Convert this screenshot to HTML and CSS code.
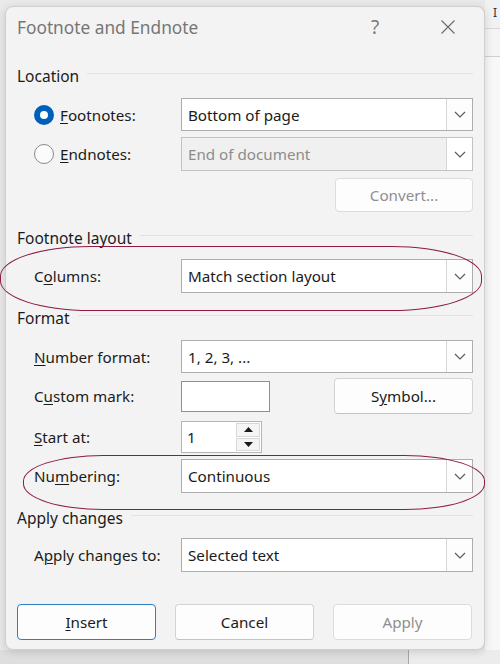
FILE: index.html
```html
<!DOCTYPE html>
<html lang="en">
<head>
    <meta charset="UTF-8">
    <meta name="viewport" content="width=device-width, initial-scale=1.0">
    <title>Footnote and Endnote</title>
    <link rel="stylesheet" href="styles.css">
</head>
<body>
    <div class="screen">
        <div class="dialog">
            <header class="titlebar">
                <span class="title">Footnote and Endnote</span>
                <span class="help">?</span>
                <span class="close">
                    <svg width="14" height="14" viewBox="0 0 14 14">
                        <path d="M0.5 0.5L13.5 13.5M13.5 0.5L0.5 13.5" stroke="#6b6b6b" stroke-width="1.1" fill="none"/>
                    </svg>
                </span>
            </header>

            <div class="content">
                <div class="group-head g-location">Location</div>

                <div class="row r-foot">
                    <label class="label radio-label"><span class="radio checked"></span><span><u>F</u>ootnotes:</span></label>
                    <div class="select">
                        <span class="value">Bottom of page</span>
                        <span class="drop"><svg width="12" height="7" viewBox="0 0 12 7"><path d="M1 1L6 6L11 1" stroke="#5a5a5a" stroke-width="1.2" fill="none"/></svg></span>
                    </div>
                </div>

                <div class="row r-end">
                    <label class="label radio-label"><span class="radio"></span><span><u>E</u>ndnotes:</span></label>
                    <div class="select disabled">
                        <span class="value">End of document</span>
                        <span class="drop"><svg width="12" height="7" viewBox="0 0 12 7"><path d="M1 1L6 6L11 1" stroke="#5a5a5a" stroke-width="1.2" fill="none"/></svg></span>
                    </div>
                </div>

                <div class="row r-convert">
                    <button class="btn disabled convert">Convert...</button>
                </div>

                <div class="group-head g-layout">Footnote layout</div>

                <div class="row r-columns">
                    <span class="mark mark-columns"></span>
                    <label class="label">C<u>o</u>lumns:</label>
                    <div class="select">
                        <span class="value">Match section layout</span>
                        <span class="drop"><svg width="12" height="7" viewBox="0 0 12 7"><path d="M1 1L6 6L11 1" stroke="#5a5a5a" stroke-width="1.2" fill="none"/></svg></span>
                    </div>
                </div>

                <div class="group-head g-format">Format</div>

                <div class="row r-numfmt">
                    <label class="label"><u>N</u>umber format:</label>
                    <div class="select">
                        <span class="value">1, 2, 3, ...</span>
                        <span class="drop"><svg width="12" height="7" viewBox="0 0 12 7"><path d="M1 1L6 6L11 1" stroke="#5a5a5a" stroke-width="1.2" fill="none"/></svg></span>
                    </div>
                </div>

                <div class="row r-custom">
                    <label class="label">C<u>u</u>stom mark:</label>
                    <div class="field-pair">
                        <div class="textbox"></div>
                        <button class="btn symbol">S<u>y</u>mbol...</button>
                    </div>
                </div>

                <div class="row r-start">
                    <label class="label"><u>S</u>tart at:</label>
                    <div class="spinner">
                        <span class="spin-value">1</span>
                        <span class="spin-buttons">
                            <span class="spin-btn"><svg width="9" height="5" viewBox="0 0 9 5"><path d="M0 5L4.5 0L9 5Z" fill="#1a1a1a"/></svg></span>
                            <span class="spin-btn"><svg width="9" height="5" viewBox="0 0 9 5"><path d="M0 0L4.5 5L9 0Z" fill="#1a1a1a"/></svg></span>
                        </span>
                    </div>
                </div>

                <div class="row r-numbering">
                    <span class="mark mark-numbering"></span>
                    <label class="label">Nu<u>m</u>bering:</label>
                    <div class="select">
                        <span class="value">Continuous</span>
                        <span class="drop"><svg width="12" height="7" viewBox="0 0 12 7"><path d="M1 1L6 6L11 1" stroke="#5a5a5a" stroke-width="1.2" fill="none"/></svg></span>
                    </div>
                </div>

                <div class="group-head g-apply">Apply changes</div>

                <div class="row r-apply">
                    <label class="label">A<u>p</u>ply changes to:</label>
                    <div class="select">
                        <span class="value">Selected text</span>
                        <span class="drop"><svg width="12" height="7" viewBox="0 0 12 7"><path d="M1 1L6 6L11 1" stroke="#5a5a5a" stroke-width="1.2" fill="none"/></svg></span>
                    </div>
                </div>

                <div class="actions">
                    <button class="btn primary"><u>I</u>nsert</button>
                    <button class="btn">Cancel</button>
                    <button class="btn disabled">Apply</button>
                </div>
            </div>
        </div>

        <div class="side">
            <div class="side-top"><span class="caret">I</span></div>
            <div class="side-mid"></div>
            <div class="side-rest"></div>
        </div>
    </div>
    <div class="floor"></div>
</body>
</html>
```

FILE: styles.css
```css
body {
    margin: 0;
    width: 500px;
    height: 664px;
    overflow: hidden;
    font-family: "Noto Sans", "Open Sans", sans-serif;
    font-size: 15.2px;
    color: #1b1b1b;
    background: #e9e9e9;
}

.screen {
    display: flex;
    align-items: flex-start;
}

.dialog {
    position: relative;
    box-sizing: border-box;
    width: 480px;
    height: 644px;
    margin: 6px 0 0 5px;
    background: #f3f3f3;
    border: 1px solid #cfcfcf;
    border-radius: 8px;
    box-shadow: 0 2px 8px rgba(0, 0, 0, 0.14);
    z-index: 1;
}

.side {
    flex: 1;
    display: flex;
    flex-direction: column;
}

.side-top {
    height: 28px;
    border-bottom: 1px solid #d8d8d8;
    background: #f1f1f1;
    position: relative;
}

.caret {
    position: absolute;
    left: 8px;
    top: 4px;
    font-size: 12px;
    color: #333;
}

.side-mid {
    height: 27px;
    background: #f4f4f4;
    border-bottom: 1px solid #d0d0d0;
}

.side-rest {
    height: 620px;
    background: #f7f7f7;
}

.floor {
    position: absolute;
    left: 0;
    top: 650px;
    width: 500px;
    height: 14px;
    background: linear-gradient(to right, #dedede 408px, #a8a8a8 408px, #a8a8a8 409px, #ececec 409px);
}

/* title bar */
.titlebar {
    display: flex;
    align-items: center;
    height: 45px;
    padding-left: 11px;
}

.title {
    flex: 1;
    font-size: 17.3px;
    color: #767676;
    margin-top: -4px;
}

.help {
    width: 20px;
    text-align: center;
    font-size: 19px;
    color: #7a7a7a;
    margin-right: 56px;
    margin-top: -5px;
}

.close {
    display: flex;
    margin-right: 29px;
    margin-top: -5px;
}

/* content */
.content {
    padding: 0 11px 10px 11px;
    display: flex;
    flex-direction: column;
}

.group-head {
    display: flex;
    align-items: center;
    gap: 8px;
    height: 20px;
    font-size: 15.5px;
}

.group-head::after {
    content: "";
    flex: 1;
    height: 1px;
    background: #e2e2e2;
    margin-top: -6px;
}

.g-location { margin-top: 14px; }
.g-layout { margin-top: 16px; }
.g-format { margin-top: 15px; }
.g-apply { margin-top: 15px; }

.row {
    position: relative;
    display: flex;
    align-items: center;
}

.label {
    box-sizing: border-box;
    width: 164px;
    padding-left: 17px;
    flex-shrink: 0;
}

.radio-label {
    display: flex;
    align-items: center;
    gap: 6px;
}

u {
    text-underline-offset: 2px;
    text-decoration-thickness: 1px;
}

.radio {
    box-sizing: border-box;
    width: 20px;
    height: 20px;
    border-radius: 50%;
    border: 1px solid #8a8a8a;
    background: #fbfbfb;
}

.radio.checked {
    border: 6px solid #005fb8;
    background: #fff;
}

.r-foot { margin-top: 12px; height: 33px; }
.r-end { margin-top: 6px; height: 34px; }
.r-convert { margin-top: 7px; height: 34px; justify-content: flex-end; }
.r-columns { margin-top: 11px; height: 34px; }
.r-numfmt { margin-top: 12px; height: 33px; }
.r-custom { margin-top: 5px; height: 36px; }
.r-start { margin-top: 7px; height: 32px; }
.r-numbering { margin-top: 6px; height: 34px; }
.r-apply { margin-top: 10px; height: 34px; }

/* select box */
.select {
    box-sizing: border-box;
    flex: 1;
    height: 100%;
    display: flex;
    align-items: stretch;
    background: #fff;
    border: 1px solid #adadad;
}

.select .value {
    flex: 1;
    display: flex;
    align-items: center;
    padding-left: 6px;
}

.select .drop {
    width: 25px;
    display: flex;
    align-items: center;
    justify-content: center;
    border-left: 1px solid #d6d6d6;
    background: #fdfdfd;
}

.select.disabled {
    background: #f0f0f0;
    border-color: #c2c2c2;
}

.select.disabled .value {
    color: #8c8c8c;
}

.select.disabled .drop {
    background: #fff;
}

/* buttons */
.btn {
    box-sizing: border-box;
    height: 36px;
    font-family: inherit;
    font-size: 15.2px;
    color: #1b1b1b;
    background: #fdfdfd;
    border: 1px solid #d3d3d3;
    border-bottom-color: #c4c4c4;
    border-radius: 4px;
    padding: 0;
}

.btn.disabled {
    color: #8f8f8f;
    border-color: #dcdcdc;
}

.btn.primary {
    border: 1.5px solid #2f7fc6;
}

.convert {
    width: 138px;
    height: 34px;
}

.field-pair {
    flex: 1;
    display: flex;
    align-items: center;
    justify-content: space-between;
}

.textbox {
    box-sizing: border-box;
    width: 89px;
    height: 31px;
    background: #fff;
    border: 1px solid #8f8f8f;
}

.symbol {
    width: 139px;
    height: 36px;
}

/* spinner */
.spinner {
    box-sizing: border-box;
    width: 81px;
    height: 32px;
    display: flex;
    background: #fff;
    border: 1px solid #b5b5b5;
}

.spin-value {
    flex: 1;
    display: flex;
    align-items: center;
    padding-left: 5px;
}

.spin-buttons {
    width: 24px;
    display: flex;
    flex-direction: column;
    gap: 1px;
    padding: 1px;
}

.spin-btn {
    flex: 1;
    display: flex;
    align-items: center;
    justify-content: center;
    background: #f5f5f5;
    border: 1px solid #d8d8d8;
}

/* actions */
.actions {
    margin-top: 32px;
    display: grid;
    grid-template-columns: 139px 139px 139px;
    gap: 19px;
}

/* red annotation ellipses */
.mark {
    position: absolute;
    border: 1px solid #8e1b46;
    pointer-events: none;
}

.mark-columns {
    left: -17px;
    top: -13px;
    width: 480px;
    height: 63px;
    border-radius: 90px / 30px;
}

.mark-numbering {
    left: 6px;
    top: -4px;
    width: 460px;
    height: 53px;
    border-radius: 80px / 26px;
}
```
